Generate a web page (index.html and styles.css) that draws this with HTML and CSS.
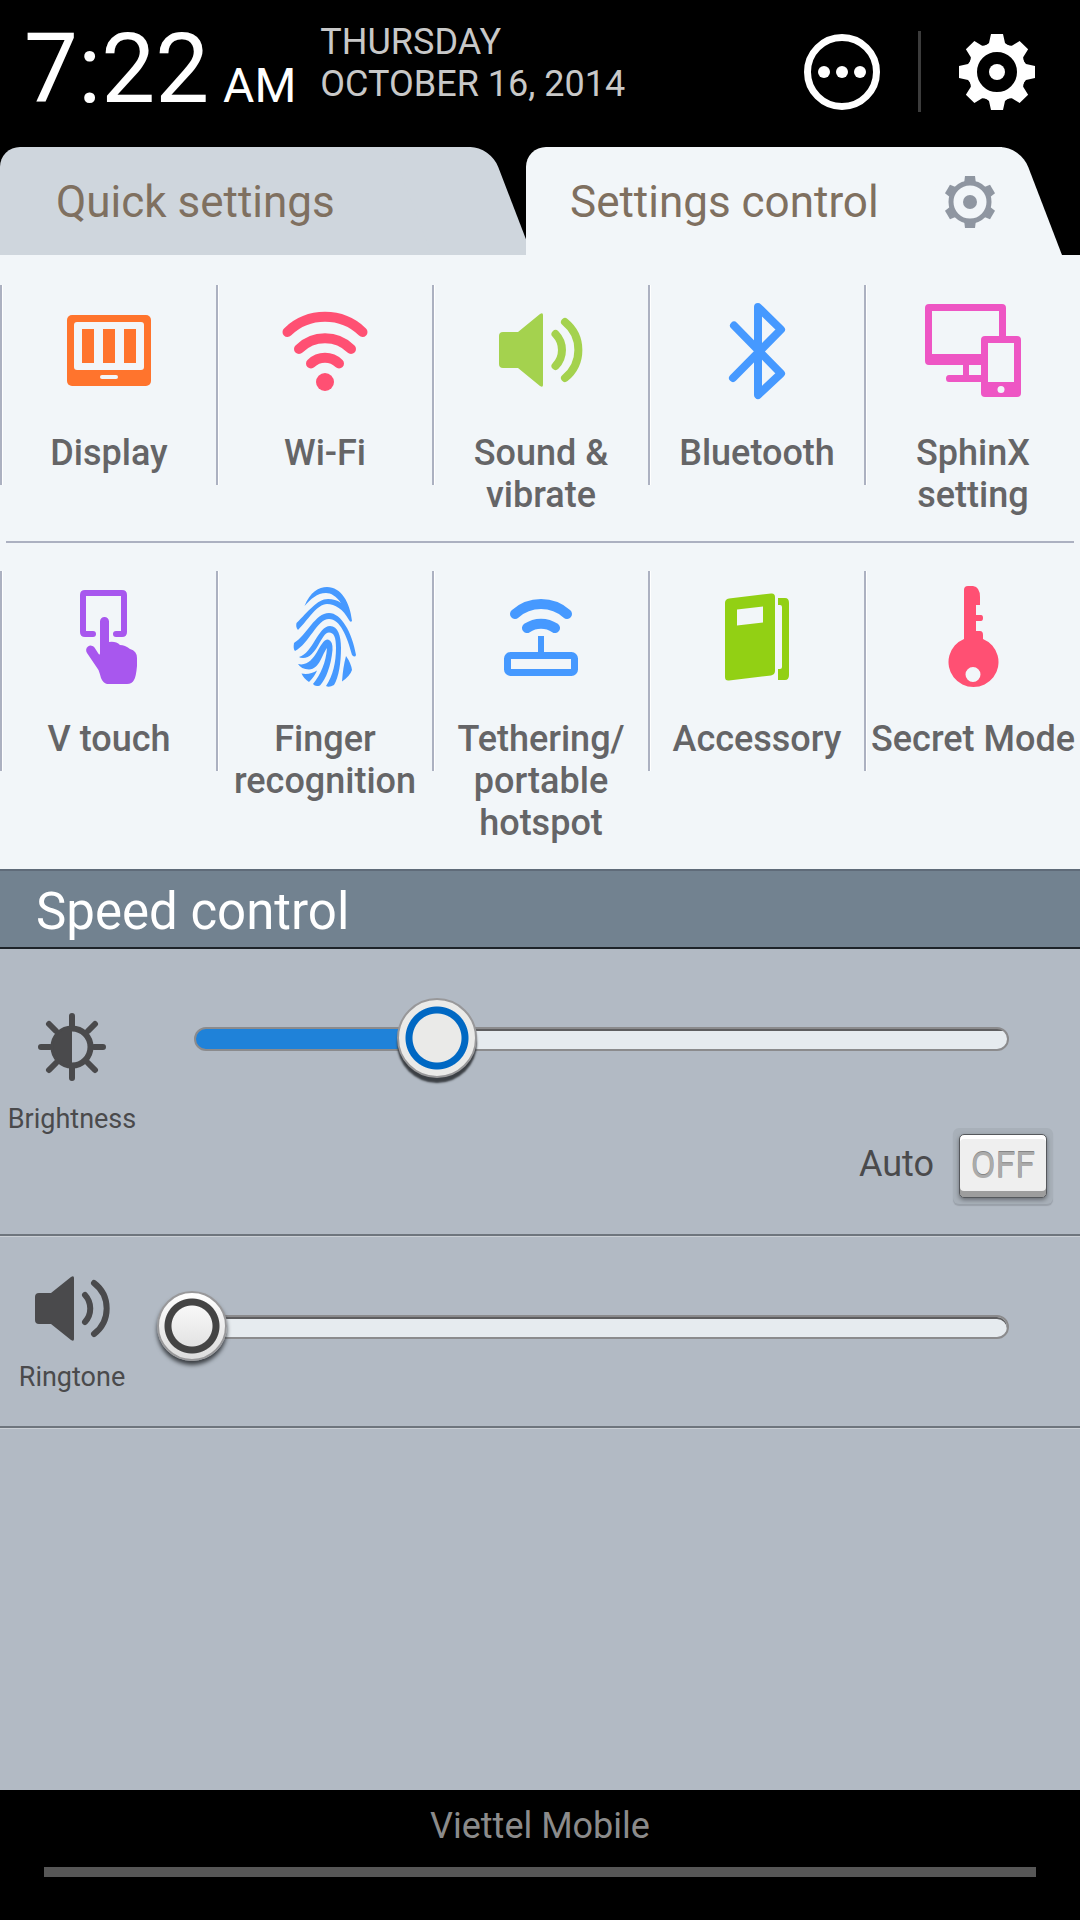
FILE: index.html
```html
<!DOCTYPE html>
<html lang="en">
<head>
  <meta charset="UTF-8">
  <meta name="viewport" content="width=device-width, initial-scale=1.0">
  <title>Settings control</title>
  <link rel="stylesheet" href="styles.css">
</head>
<body>

  <header class="status">
    <div class="clock">
      <span class="time">7:22</span>
      <span class="ampm">AM</span>
    </div>
    <div class="date">THURSDAY<br>OCTOBER 16, 2014</div>
    <div class="status-actions">
      <button class="icon-btn" type="button" aria-label="More">
        <svg width="76" height="76" viewBox="0 0 76 76" fill="#fff">
          <circle cx="38" cy="38" r="34.5" fill="none" stroke="#fff" stroke-width="7"/>
          <circle cx="20" cy="38" r="6"/>
          <circle cx="38" cy="38" r="6"/>
          <circle cx="56" cy="38" r="6"/>
        </svg>
      </button>
      <span class="separator"></span>
      <button class="icon-btn" type="button" aria-label="Settings">
        <svg width="76" height="76" viewBox="0 0 76 76" fill="#fff">
          <g id="teeth">
            <path id="tooth" d="M32 0H44L46 9L52 14H24L30 9Z"/>
            <use href="#tooth" transform="rotate(45 38 38)"/>
            <use href="#tooth" transform="rotate(90 38 38)"/>
            <use href="#tooth" transform="rotate(135 38 38)"/>
          </g>
          <use href="#teeth" transform="rotate(180 38 38)"/>
          <circle cx="38" cy="38" r="24.5" fill="none" stroke="#fff" stroke-width="9"/>
          <circle cx="38" cy="38" r="8"/>
        </svg>
      </button>
    </div>
  </header>

  <nav class="tabs">
    <a class="tab" href="#quick">Quick settings</a>
    <a class="tab active" href="#control">
      Settings control
      <svg width="52" height="52" viewBox="0 0 52 52" fill="#8f96a1">
        <g id="cogs">
          <path id="cog" d="M20 8L21 0H31L32 8Z"/>
          <use href="#cog" transform="rotate(60 26 26)"/>
          <use href="#cog" transform="rotate(120 26 26)"/>
        </g>
        <use href="#cogs" transform="rotate(180 26 26)"/>
        <path d="M17.500 4L14 0" fill="none"/>
        <circle cx="26" cy="26" r="19" fill="none" stroke="#8f96a1" stroke-width="5"/>
        <circle cx="26" cy="26" r="7"/>
      </svg>
    </a>
  </nav>

  <!-- Shortcuts -->
  <main class="panel" id="control">
    <div class="tiles">
      <a class="tile" href="#display">
        <svg class="tile-icon" viewBox="0 0 108 108">
          <rect x="12" y="19" width="84" height="71" rx="5" fill="#ff742d"/>
          <rect x="19" y="26" width="70" height="48" rx="3" fill="#f2f6f9"/>
          <path d="M27 33h12v34h-12zM48 33h12v34h-12zM69 33h12v34h-12z" fill="#ff742d"/>
          <rect x="45" y="79" width="18" height="4" rx="2" fill="#f2f6f9"/>
        </svg>
        Display
      </a>
      <a class="tile" href="#wifi">
        <svg class="tile-icon" viewBox="0 0 108 108" fill="none" stroke="#ff5073" stroke-width="10" stroke-linecap="round">
          <path d="M16.500 36A54 54 0 0 1 91.500 36M28 53A37 37 0 0 1 80 53M40 67.500A20 20 0 0 1 68 67.500"/>
          <circle cx="54" cy="86" r="9" fill="#ff5073" stroke="none"/>
        </svg>
        Wi-Fi
      </a>
      <a class="tile" href="#sound">
        <svg class="tile-icon" viewBox="0 0 108 108">
          <path d="M16 36H31L53 18Q56 16 56 19V89Q56 92 53 90L31 72H16Q12 72 12 68V40Q12 36 16 36Z" fill="#a4d24e"/>
          <path d="M68.500 38A23 23 0 0 1 68.500 70M78 26A36 36 0 0 1 78 82" fill="none" stroke="#a4d24e" stroke-width="8" stroke-linecap="round"/>
        </svg>
        Sound &amp; vibrate
      </a>
      <a class="tile" href="#bluetooth">
        <svg class="tile-icon" viewBox="0 0 108 108" fill="none" stroke="#4699ff" stroke-width="8" stroke-linecap="round" stroke-linejoin="round">
          <path d="M31 29.500L78 77.500L55 99V11L78 33.500L30 82"/>
        </svg>
        Bluetooth
      </a>
      <a class="tile" href="#sphinx">
        <svg class="tile-icon" viewBox="0 0 108 108" fill="#ee56c4">
          <path fill-rule="evenodd" d="M10 8H83Q87 8 87 12V42H80V15H13V58H64V69H50V79H64V86H30Q27 86 27 82.500T30 79H44V69H10Q6 69 6 65V12Q6 8 10 8Z"/>
          <rect x="62" y="40" width="40" height="61" rx="4"/>
          <rect x="69" y="47" width="26" height="39" fill="#f2f6f9"/>
          <circle cx="82" cy="93.500" r="3.500" fill="#f2f6f9"/>
        </svg>
        SphinX setting
      </a>
    </div>

    <div class="tiles">
      <a class="tile" href="#vtouch">
        <svg class="tile-icon" viewBox="0 0 108 108">
          <path d="M38 52H30Q28 52 28 50V13Q28 11 30 11H67Q69 11 69 13V50Q69 52 67 52H61" fill="none" stroke="#a857ee" stroke-width="6" stroke-linecap="round"/>
          <path d="M45 39.500A4.500 4.500 0 0 1 54 39.500V60Q61 59 65 63Q70 63 75 67Q82 69 82 76V84Q81 95 79 98Q77 102 72 102H52Q48 101 46 96Q45 92 43.500 88L32 71A4.500 4.500 0 0 1 39.500 65.500L43 71Q45 74 45 71Z" fill="#a857ee"/>
        </svg>
        V touch
      </a>
      <a class="tile" href="#finger">
        <svg class="tile-icon" viewBox="0 0 108 108" fill="#4699ff">
          <path d="M33.500 24C39 10 48 5 56 5C70 5 79 20 81 39Q79.500 41 78 38C72 27 64 22 56 22C46 22 37 38 27 48C25 46 25 43 25.500 41C37 30 46 17 57 17C62 17 66 18 70 21C65 14 60 11 55 11C46 11 40 17 33.500 24Z"/>
          <path d="M23 61C36 53 44 31 58 31C70 31 81 50 85 73Q84 76 81 73C76 54 69 37 58 37C46 37 38 62 24 69Q22 67 23 61Z"/>
          <path d="M28 75C42 71 47 44 59 44C67 44 70 54 70 66C70 80 68 95 63 103Q58 106 55 104C62 94 65 80 65 66C65 55 63 50.500 58 50.500C50 50.500 46 76 32 76Q29 76 28 75Z"/>
          <path d="M27 82C45 86 48 57 57 57.500Q62 59 61.500 68C60 84 55 97 49 103.500Q44 105 42 102C50 92 55 80 56 66C51 72 49 87 38 87.500Q30 87 27 82Z"/>
          <path d="M30.500 91.500Q39 93 46 88.500Q44 94 38 100Q33 97 30.500 91.500ZM75 74Q80 81 81 88Q79 94 71 99.500Q72 85 75 74Z"/>
        </svg>
        Finger recognition
      </a>
      <a class="tile" href="#tethering">
        <svg class="tile-icon" viewBox="0 0 108 108" fill="none" stroke="#4699ff">
          <path d="M28 32A39 39 0 0 1 80 32M40 46A25 25 0 0 1 68 46" stroke-width="10" stroke-linecap="round"/>
          <path d="M54 54V73" stroke-width="6"/>
          <rect x="20.500" y="73.500" width="67" height="17" rx="3" stroke-width="7"/>
        </svg>
        Tethering/<wbr>portable hotspot
      </a>
      <a class="tile" href="#accessory">
        <svg class="tile-icon" viewBox="0 0 108 108" fill="#92d014">
          <path fill-rule="evenodd" d="M26 16.500L68 11.500Q72 11 72 15V89Q72 92.500 68 93.500L26 98.500Q22 99 22 95V21Q22 17 26 16.500ZM34 27.500V43.500L60 40.500V24.500Z"/>
          <path d="M75 16H82Q86 16 86 21V93Q86 98 82 98H75V87H77Q79 87 79 85V25Q79 23 77 23H75Z"/>
        </svg>
        Accessory
      </a>
      <a class="tile" href="#secret">
        <svg class="tile-icon" viewBox="0 0 108 108" fill="#ff5073">
          <path fill-rule="evenodd" d="M45 8Q45 4 49 4H54Q61 5 61 15V23H57V33H62Q64 33 64 36T62 39H57V49H61Q64 49 64 53V57A25 25 0 1 1 45 57ZM54 85A7.500 7.500 0 1 0 54 100A7.500 7.500 0 1 0 54 85Z"/>
        </svg>
        Secret Mode
      </a>
    </div>
  </main>

  <h2 class="section-title">Speed control</h2>

  <!-- Sliders -->
  <section class="controls">
    <div class="control-row brightness">
      <label class="control-label" for="brightness">
        <svg width="80" height="80" viewBox="0 0 80 80">
          <path d="M40 7V17M40 59V69M9 38H18M62 38H71M17 15L24 22M56 54L63 61M63 15L56 22M24 54L17 61" fill="none" stroke="#4a4a4c" stroke-width="6" stroke-linecap="round"/>
          <circle cx="40" cy="38" r="18.500" fill="none" stroke="#4a4a4c" stroke-width="6"/>
          <path d="M40 19A19 19 0 0 0 40 57Z" fill="#4a4a4c"/>
        </svg>
        Brightness
      </label>
      <div class="control-body">
        <input class="slider" id="brightness" type="range" min="0" max="255" value="70">
        <div class="auto">
          <label for="auto">Auto</label>
          <span class="toggle-frame"><button class="toggle" id="auto" type="button" aria-pressed="false">OFF</button></span>
        </div>
      </div>
    </div>

    <div class="control-row ringtone">
      <label class="control-label" for="ringtone">
        <svg width="80" height="80" viewBox="0 0 80 80">
          <path d="M7 26H19L39 10Q42 8 42 11V72Q42 75 39 73L19 57H7Q3 57 3 53V30Q3 26 7 26Z" fill="#4a4a4c"/>
          <path d="M53 28A20 20 0 0 1 53 55M62 16A32 32 0 0 1 62 67" fill="none" stroke="#4a4a4c" stroke-width="6" stroke-linecap="round"/>
        </svg>
        Ringtone
      </label>
      <div class="control-body">
        <input class="slider" id="ringtone" type="range" min="0" max="100" value="0">
      </div>
    </div>
  </section>

  <footer class="footer">
    <div class="carrier">Viettel Mobile</div>
    <div class="handle"></div>
  </footer>

</body>
</html>
```
FILE: styles.css
```css
/* General */
* {
  box-sizing: border-box;
}

body {
  margin: 0;
  min-height: 100vh;
  display: flex;
  flex-direction: column;
  font-family: Roboto, sans-serif;
  font-size: 36px;
  line-height: 42px;
  background-color: #b2bac4;
}

a {
  color: inherit;
  text-decoration: none;
}

svg {
  display: block;
}

/* Status bar */
.status {
  display: flex;
  align-items: flex-start;
  height: 147px;
  padding: 0 45px 0 24px;
  background-color: #000;
  color: #fff;
}

.clock {
  display: flex;
  align-items: baseline;
  gap: 14px;
  padding-top: 13px;
}

.time {
  font-size: 96px;
  line-height: 112px;
}

.ampm {
  font-size: 48px;
}

.date {
  margin-left: 24px;
  padding-top: 21px;
  color: #c8c8c8;
}

.status-actions {
  display: flex;
  align-items: center;
  gap: 38px;
  margin-left: auto;
  padding-top: 31px;
}

.icon-btn {
  padding: 0;
  border: none;
  background: none;
  cursor: pointer;
}

.separator {
  width: 3px;
  height: 81px;
  background-color: #3c3c3c;
}

/* Tabs */
.tabs {
  display: grid;
  grid-template-columns: 526fr 536fr;
  padding-right: 18px;
  background-color: #000;
}

.tab {
  position: relative;
  z-index: 0;
  display: flex;
  align-items: center;
  justify-content: space-between;
  height: 108px;
  padding: 2px 66px 0 56px;
  font-size: 44px;
  color: #7f7060;
}

/* body of the tab and its slanted right edge */
.tab::before,
.tab::after {
  content: "";
  position: absolute;
  z-index: -1;
  top: 0;
  bottom: 0;
  background-color: #cfd6dd;
}

.tab::before {
  left: 0;
  right: 60px;
  border-top-left-radius: 20px;
}

.tab::after {
  right: -6px;
  width: 100px;
  border-top-right-radius: 20px;
  transform: skewX(21deg);
  transform-origin: bottom;
}

.tab.active {
  padding-left: 44px;
}

.tab.active::before,
.tab.active::after {
  background-color: #f2f6f9;
}

.tab.active::after {
  right: 0;
}

/* Shortcuts */
.panel {
  background-color: #f2f6f9;
}

.tiles {
  display: grid;
  grid-template-columns: repeat(5, 1fr);
  padding: 30px 0 25px;
}

.tiles + .tiles {
  background: linear-gradient(#acb1c1, #acb1c1) center top / calc(100% - 12px) 2px no-repeat;
}

.tile {
  display: flex;
  flex-direction: column;
  align-items: center;
  min-height: 200px;
  padding: 11px 3px 0 5px;
  text-align: center;
  font-weight: 500;
  color: #656567;
  background:
    linear-gradient(#acb1c1, #acb1c1) left top / 2px 200px no-repeat,
    linear-gradient(#fff, #fff) left top / 3px 200px no-repeat;
}

.tile-icon {
  width: 108px;
  height: 108px;
  margin-bottom: 28px;
}

/* Speed control */
.section-title {
  margin: 0;
  padding: 6px 36px 0;
  border-top: 2px solid #5f6b79;
  border-bottom: 2px solid #1d2329;
  font-size: 51px;
  font-weight: 400;
  line-height: 70px;
  color: #fff;
  background-color: #728290;
}

.controls {
  flex: 1;
}

.control-row {
  display: grid;
  grid-template-columns: 144px 1fr;
  gap: 50px;
  padding-right: 27px;
  border-bottom: 2px solid #6e757d;
  box-shadow: 0 1px 0 #cbd0d6;
  color: #4a4a4c;
}

.brightness {
  padding-top: 50px;
  padding-bottom: 30px;
}

.brightness .control-label {
  padding-top: 10px;
}

.ringtone {
  padding-top: 31px;
  padding-bottom: 33px;
}

.ringtone .control-body {
  padding-top: 20px;
}

.control-label {
  display: flex;
  flex-direction: column;
  align-items: center;
  gap: 14px;
  font-size: 27px;
  line-height: 32px;
}

.control-body {
  display: flex;
  flex-direction: column;
  gap: 49px;
}

.slider {
  -webkit-appearance: none;
  appearance: none;
  height: 80px;
  margin: 0 44px 0 0;
  background: none;
  cursor: pointer;
}

.slider::-webkit-slider-runnable-track {
  height: 24px;
  border: 2px solid #8b8b8d;
  border-radius: 12px;
  background-color: #e6ebef;
  box-shadow: inset 0 2px 0 #5e5e60;
}

.slider::-webkit-slider-thumb {
  -webkit-appearance: none;
  width: 70px;
  height: 70px;
  margin-top: -26px;
  margin-left: -39px;
  border: 2px solid #98989a;
  border-radius: 50%;
  background: radial-gradient(circle, transparent 20px, #444 21px, #444 27px, transparent 28px), linear-gradient(#fff, #dcdcdc);
  box-shadow: 0 4px 4px #3c4045;
}

#brightness::-webkit-slider-runnable-track {
  background: linear-gradient(90deg, #1f82d9 30%, #5e5e60 30%) left top / 100% 2px no-repeat,
    linear-gradient(90deg, #1f82d9 30%, #e6ebef 30%);
  box-shadow: none;
}

#brightness::-webkit-slider-thumb {
  width: 80px;
  height: 80px;
  margin-top: -31px;
  margin-left: 0;
  background: radial-gradient(circle, transparent 24px, #0068c3 25px, #0068c3 31px, transparent 32px), #eaeae8;
  box-shadow: 0 5px 2px #3c4045;
}

.auto {
  display: flex;
  align-items: center;
  justify-content: flex-end;
  gap: 19px;
}

.auto label {
  padding-bottom: 4px;
}

.toggle-frame {
  padding: 6px;
  border-radius: 6px;
  background-color: #a8b0b9;
  box-shadow: 0 2px 1px #9aa1aa;
}

.toggle {
  display: block;
  width: 88px;
  height: 64px;
  padding: 0;
  border: 1px solid #55585c;
  border-radius: 5px;
  font-family: inherit;
  font-size: 36px;
  font-weight: 400;
  line-height: 56px;
  color: #ababab;
  text-shadow: 0 -1px 0 #858585;
  background-color: #efefef;
  box-shadow: inset 0 -6px 0 #9d9d9d, inset 0 4px 0 #fff, 0 2px 4px #6a6e74;
  cursor: pointer;
}

/* Footer */
.footer {
  padding: 15px 44px 43px;
  background-color: #000;
}

.carrier {
  margin-bottom: 20px;
  text-align: center;
  color: #8b8b8b;
}

.handle {
  height: 10px;
  background-color: #575757;
}
```
